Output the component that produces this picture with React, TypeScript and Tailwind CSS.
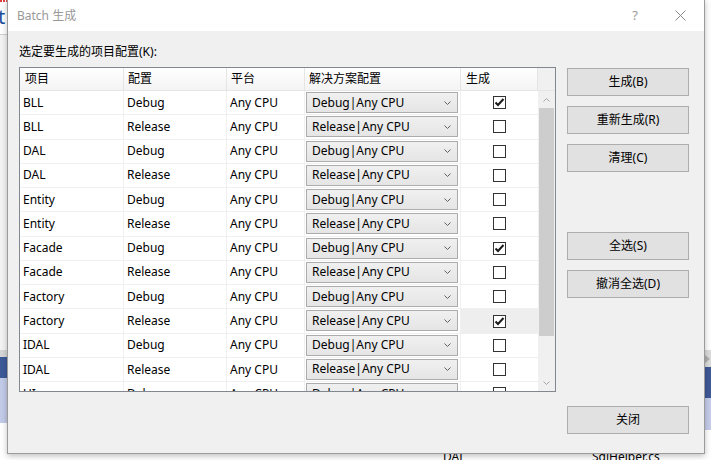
import React from "react";

type Row = { project: string; config: string; build: boolean; hover?: boolean };

const rows: Row[] = [
  { project: "BLL", config: "Debug", build: true },
  { project: "BLL", config: "Release", build: false },
  { project: "DAL", config: "Debug", build: false },
  { project: "DAL", config: "Release", build: false },
  { project: "Entity", config: "Debug", build: false },
  { project: "Entity", config: "Release", build: false },
  { project: "Facade", config: "Debug", build: true },
  { project: "Facade", config: "Release", build: false },
  { project: "Factory", config: "Debug", build: false },
  { project: "Factory", config: "Release", build: true, hover: true },
  { project: "IDAL", config: "Debug", build: false },
  { project: "IDAL", config: "Release", build: false },
  { project: "UI", config: "Debug", build: false },
];

function Chevron({ up = false, className = "" }: { up?: boolean; className?: string }) {
  return (
    <svg width="7" height="4" viewBox="0 0 7 4" className={className}>
      <polyline
        points={up ? "0.5,3.5 3.5,0.5 6.5,3.5" : "0.5,0.5 3.5,3.5 6.5,0.5"}
        fill="none"
        stroke="currentColor"
        strokeWidth="1"
      />
    </svg>
  );
}

function CheckBox({ checked }: { checked: boolean }) {
  return (
    <div className="w-[13px] h-[13px] border border-[#333333] bg-white flex items-center justify-center">
      {checked && (
        <svg width="11" height="11" viewBox="0 0 11 11">
          <path d="M1.5 5.5 L4 8 L9.5 2" fill="none" stroke="#1a1a1a" strokeWidth="2" />
        </svg>
      )}
    </div>
  );
}

function Combo({ text }: { text: string }) {
  return (
    <div className="ml-[1px] w-[152px] h-[21px] border border-[#acacac] bg-gradient-to-b from-[#f0f0f0] to-[#e5e5e5] flex items-center justify-between pl-[5px] pr-[6px]">
      <span>{text}</span>
      <Chevron className="text-[#606060]" />
    </div>
  );
}

function DlgButton({ label }: { label: string }) {
  return (
    <div className="w-[122px] h-[28px] border border-[#adadad] bg-[#e1e1e1] flex items-center justify-center">
      {label}
    </div>
  );
}

export default function App() {
  return (
    <div className="relative w-[711px] h-[460px] overflow-hidden bg-white text-[12px] text-black font-[family-name:'Noto_Sans','Noto_Sans_CJK_SC',sans-serif]">
      {/* background: parts of the IDE behind the dialog */}
      <div className="absolute left-0 top-0 w-[8px] h-[460px] flex flex-col">
        <div className="h-[4px] border-t-2 border-dotted border-[#e04040]" />
        <div className="h-[30px] text-[#1f4e9c] text-[20px] leading-[26px] -ml-[2px]">t</div>
        <div className="h-[1px] bg-[#d0d0d0]" />
        <div className="h-[315px] bg-[#f3f3f3]" />
        <div className="h-[7px] bg-[#d6d6d6]" />
        <div className="h-[21px] bg-[#3d5a99]" />
        <div className="h-[45px] bg-[#c2cbe8]" />
        <div className="flex-1 bg-white" />
      </div>
      <div className="absolute right-0 top-0 w-[8px] h-[460px] flex flex-col">
        <div className="h-[350px] bg-white" />
        <div className="h-[17px] bg-[#dcdcdc] flex items-center pl-[2px]">
          <div className="w-0 h-0 border-y-[4px] border-y-transparent border-l-[5px] border-l-[#b0b0b0]" />
        </div>
        <div className="h-[31px] bg-[#3f5897]" />
        <div className="h-[32px] bg-[#c5cde9]" />
        <div className="flex-1 bg-white" />
      </div>
      <div className="absolute left-[443px] top-[449px] leading-[16px]">DAL</div>
      <div className="absolute left-[592px] top-[449px] leading-[16px]">SqlHelper.cs</div>

      {/* dialog window */}
      <div className="absolute left-[7px] top-[-1px] w-[698px] h-[455px] border border-[#9b9b9b] bg-[#f0f0f0] shadow-[0_2px_6px_rgba(0,0,0,0.25)] flex flex-col">
        <div className="h-[31px] bg-white flex items-center pl-[9px] pr-[18px] text-[#999999]">
          <span className="flex-1">Batch 生成</span>
          <span className="mr-[37px] text-[13px]">?</span>
          <svg width="11" height="11" viewBox="0 0 11 11">
            <path d="M0.5 0.5 L10.5 10.5 M10.5 0.5 L0.5 10.5" stroke="#8a8a8a" strokeWidth="1" />
          </svg>
        </div>

        <div className="flex pl-[11px]">
          <div className="flex flex-col">
            <div className="mt-[13px] h-[16px] leading-[16px]">选定要生成的项目配置(K):</div>
            <div className="mt-[7px] w-[537px] h-[325px] border border-[#828790] bg-white flex flex-col">
              {/* header */}
              <div className="h-[23px] flex border-b border-[#e5e5e5] bg-gradient-to-b from-white to-[#f4f4f4]">
                <div className="w-[104px] border-r border-[#e5e5e5] pl-[5px] flex items-center">项目</div>
                <div className="w-[103px] border-r border-[#e5e5e5] pl-[4px] flex items-center">配置</div>
                <div className="w-[78px] border-r border-[#e5e5e5] pl-[4px] flex items-center">平台</div>
                <div className="w-[156px] border-r border-[#e5e5e5] pl-[4px] flex items-center">解决方案配置</div>
                <div className="w-[77px] border-r border-[#e5e5e5] pl-[5px] flex items-center">生成</div>
                <div className="flex-1 bg-[#f0f0f0]" />
              </div>
              {/* body */}
              <div className="flex h-[300px]">
                <div className="w-[518px] overflow-hidden">
                  {rows.map((r, i) => (
                    <div key={i} className="h-[24.27px] flex border-b border-[#f0f0f0]">
                      <div className="w-[104px] border-r border-[#f0f0f0] pl-[3px] flex items-center">{r.project}</div>
                      <div className="w-[103px] border-r border-[#f0f0f0] pl-[3px] flex items-center">{r.config}</div>
                      <div className="w-[78px] border-r border-[#f0f0f0] pl-[3px] flex items-center">Any CPU</div>
                      <div className="w-[156px] border-r border-[#f0f0f0] pt-[1px]">
                        <Combo text={`${r.config}|Any CPU`} />
                      </div>
                      <div className={`w-[77px] flex items-center justify-center ${r.hover ? "bg-[#eeeeee]" : ""}`}>
                        <CheckBox checked={r.build} />
                      </div>
                    </div>
                  ))}
                </div>
                {/* vertical scrollbar */}
                <div className="w-[17px] bg-[#f0f0f0] flex flex-col">
                  <div className="h-[17px] flex items-center justify-center text-[#a6a6a6]">
                    <Chevron up />
                  </div>
                  <div className="h-[228px] mx-[1px] bg-[#cdcdcd]" />
                  <div className="flex-1" />
                  <div className="h-[17px] flex items-center justify-center text-[#a6a6a6]">
                    <Chevron />
                  </div>
                </div>
              </div>
            </div>
          </div>

          <div className="ml-[11px] pt-[37px] flex flex-col">
            <DlgButton label="生成(B)" />
            <div className="mt-[10px]"><DlgButton label="重新生成(R)" /></div>
            <div className="mt-[10px]"><DlgButton label="清理(C)" /></div>
            <div className="mt-[60px]"><DlgButton label="全选(S)" /></div>
            <div className="mt-[10px]"><DlgButton label="撤消全选(D)" /></div>
            <div className="mt-[108px]"><DlgButton label="关闭" /></div>
          </div>
        </div>
      </div>
    </div>
  );
}
